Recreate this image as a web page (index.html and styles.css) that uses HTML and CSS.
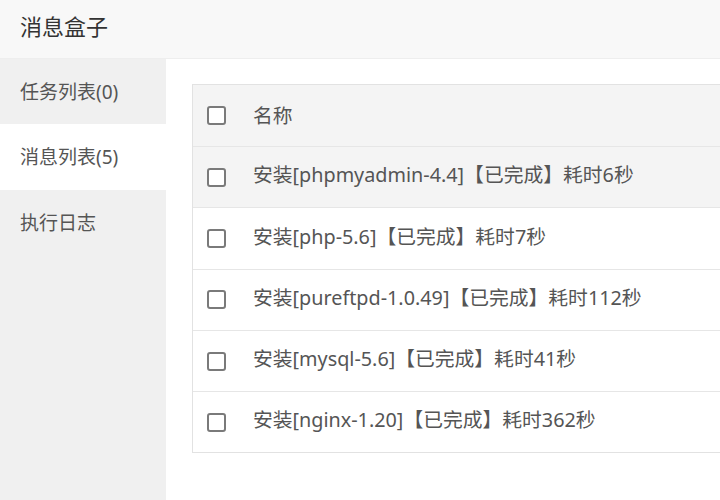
FILE: index.html
```html
<!DOCTYPE html>
<html lang="zh-CN">
<head>
<meta charset="utf-8">
<title>消息盒子</title>
<link rel="stylesheet" href="styles.css">
</head>
<body>
<div class="box">
  <div class="title">消息盒子</div>
  <div class="main">
    <ul class="side">
      <li class="side-item">任务列表(0)</li>
      <li class="side-item active">消息列表(5)</li>
      <li class="side-item">执行日志</li>
    </ul>
    <div class="content">
      <div class="table">
        <div class="row head"><span class="cb"></span><span class="txt">名称</span></div>
        <div class="row hover"><span class="cb"></span><span class="txt">安装[phpmyadmin-4.4]【已完成】耗时6秒</span></div>
        <div class="row"><span class="cb"></span><span class="txt">安装[php-5.6]【已完成】耗时7秒</span></div>
        <div class="row"><span class="cb"></span><span class="txt">安装[pureftpd-1.0.49]【已完成】耗时112秒</span></div>
        <div class="row"><span class="cb"></span><span class="txt">安装[mysql-5.6]【已完成】耗时41秒</span></div>
        <div class="row"><span class="cb"></span><span class="txt">安装[nginx-1.20]【已完成】耗时362秒</span></div>
      </div>
    </div>
  </div>
</div>
</body>
</html>
```
FILE: styles.css
```css
* { box-sizing: border-box; }
html, body { margin: 0; padding: 0; }
body {
  width: 720px;
  height: 500px;
  overflow: hidden;
  background: #fff;
  font-family: "Noto Sans", "Noto Sans CJK SC", sans-serif;
  color: #555;
}
.box { display: flex; flex-direction: column; height: 500px; }
.title {
  height: 59px;
  flex: none;
  background: #f8f8f8;
  border-bottom: 1px solid #eee;
  padding-left: 20px;
  font-size: 22px;
  line-height: 52px;
  color: #333;
}
.main { flex: 1; display: flex; min-height: 0; }
.side {
  list-style: none;
  margin: 0;
  padding: 0;
  width: 166px;
  flex: none;
  background: #f0f0f0;
}
.side-item {
  height: 65px;
  line-height: 67px;
  padding-left: 20px;
  font-size: 19px;
  color: #555;
}
.side-item.active { background: #fff; height: 66px; line-height: 67px; }
.content { flex: 1; padding: 25px 0 0 26px; overflow: hidden; }
.table {
  width: 560px;
  border: 1px solid #e2e2e2;
  border-right: none;
}
.row {
  display: flex;
  align-items: center;
  height: 61.3px;
  border-top: 1px solid #e6e6e6;
  font-size: 19.8px;
  white-space: nowrap;
}
.row:first-child { border-top: none; height: 61px; }
.row.head, .row.hover { background: #f4f4f4; }
.cb {
  width: 19px;
  height: 19px;
  border: 2px solid #7a7a7a;
  border-radius: 3px;
  margin-left: 14px;
  background: #fff;
  flex: none;
}
.txt { margin-left: 27px; line-height: 1; padding-bottom: 4px; }
.head .txt { padding-bottom: 0; }
```
